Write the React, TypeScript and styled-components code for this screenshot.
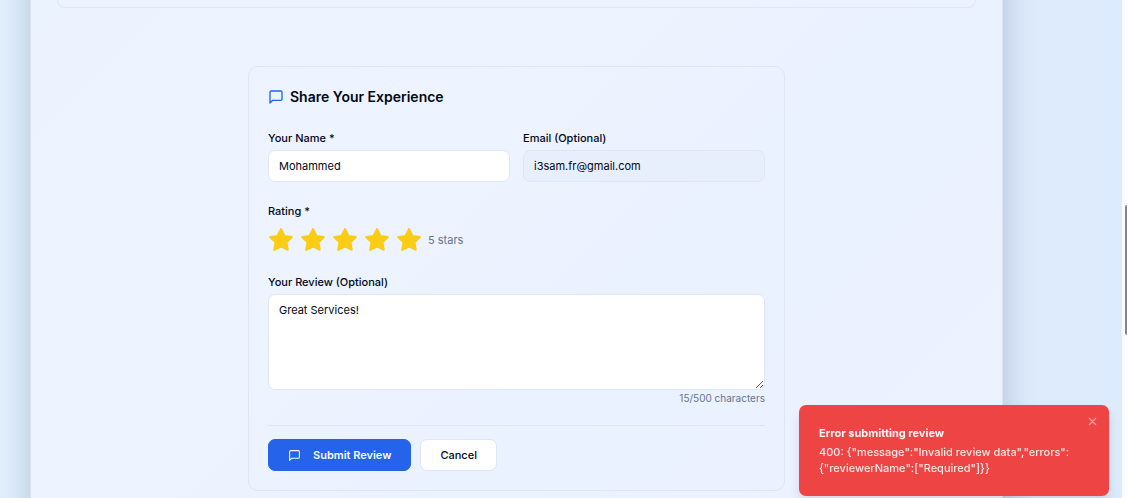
import React, { useState } from "react";
import styled, { createGlobalStyle } from "styled-components";

const ink = "#020817";
const line = "#dfe6f1";
const muted = "#64748b";
const blue = "#2563eb";

const GlobalStyle = createGlobalStyle`
  *, *::before, *::after { box-sizing: border-box; }
  body {
    margin: 0;
    color: ${ink};
    font-family: Inter, "Liberation Sans", sans-serif;
    font-size: 11px;
    line-height: 16px;
  }
  button, input, textarea { font: inherit; color: inherit; }
  h2, h3, p { margin: 0; }
`;

const Page = styled.div`
  display: flex;
  min-height: 100vh;
  overflow: hidden;
  background: linear-gradient(90deg, #e2f0fe, #deebfd 90%, #dcebfd);
`;

const Content = styled.div`
  flex: 1;
  display: flex;
  padding: 0 119px 0 30px;
`;

/* The sheet runs past the top and bottom of the page so its side shadow stays even. */
const Sheet = styled.main`
  flex: 1;
  display: flex;
  flex-direction: column;
  gap: 58px;
  margin: -40px 0;
  padding: 40px 26px 47px;
  border: solid #dbe4ee;
  border-width: 0 1px;
  background: linear-gradient(135deg, #ebf3fe 0%, #edf4ff 36%, #ebf2ff 62%, #ecf3ff 100%);
  box-shadow: 0 0 32px rgba(15, 35, 65, 0.22);
`;

const PreviousCard = styled.section`
  height: 8px;
  border: 1px solid ${line};
  border-top: 0;
  border-radius: 0 0 10px 10px;
`;

const FormCard = styled.form`
  width: 100%;
  max-width: 537px;
  margin: 0 auto;
  padding: 19px;
  display: flex;
  flex-direction: column;
  gap: 19px;
  border: 1px solid ${line};
  border-radius: 10px;
`;

const Fields = styled.div`
  display: flex;
  flex-direction: column;
  gap: 21px;
`;

const Title = styled.h2`
  display: flex;
  align-items: center;
  gap: 6px;
  padding-bottom: 3px;
  font-size: 14px;
  line-height: 22px;
  font-weight: 600;
  svg { color: ${blue}; }
`;

const Columns = styled.div`
  display: grid;
  grid-template-columns: 1fr 1fr;
  gap: 13px;
`;

const Field = styled.div<{ $gap?: number }>`
  display: flex;
  flex-direction: column;
  gap: ${(p) => p.$gap ?? 4}px;
`;

const Label = styled.label`
  font-weight: 500;
`;

const TextInput = styled.input`
  width: 100%;
  height: 32px;
  padding: 0 10px;
  border: 1px solid ${line};
  border-radius: 7px;
  background: #fff;
  &:read-only { background: #e8effc; }
`;

const TextArea = styled.textarea`
  display: block;
  width: 100%;
  height: 96px;
  padding: 7px 10px;
  border: 1px solid ${line};
  border-radius: 7px;
  background: #fff;
  resize: vertical;
`;

const Counter = styled.p`
  font-size: 10px;
  text-align: right;
  color: ${muted};
`;

const Stars = styled.div`
  display: flex;
  align-items: center;
  gap: 6px;
  color: ${muted};
`;

const StarButton = styled.button<{ $on: boolean }>`
  display: flex;
  padding: 0;
  border: 0;
  background: none;
  color: ${(p) => (p.$on ? "#facc15" : "#d1d5db")};
  cursor: pointer;
`;

const Actions = styled.div`
  display: flex;
  gap: 9px;
  padding-top: 13px;
  border-top: 1px solid ${line};
`;

const Button = styled.button<{ $primary?: boolean }>`
  display: flex;
  align-items: center;
  gap: 12px;
  height: 32px;
  padding: 0 19px;
  border: 1px solid ${(p) => (p.$primary ? blue : line)};
  border-radius: 7px;
  background: ${(p) => (p.$primary ? blue : "#fff")};
  color: ${(p) => (p.$primary ? "#f8fafc" : ink)};
  font-weight: ${(p) => (p.$primary ? 600 : 500)};
  cursor: pointer;
`;

const Track = styled.div`
  position: relative;
  width: 5px;
  background: #fcfcfc;
`;

const Thumb = styled.div`
  position: absolute;
  top: 205px;
  right: 0;
  width: 2px;
  height: 130px;
  border-radius: 2px 0 0 2px;
  background: #858585;
`;

const Toast = styled.aside`
  position: fixed;
  right: 18px;
  bottom: 2px;
  width: 310px;
  padding: 20px;
  border-radius: 7px;
  background: #ef4444;
  color: #f8fafc;
  box-shadow: 0 8px 12px rgba(0, 0, 0, 0.1);
`;

const ToastTitle = styled.h3`
  font-size: 11px;
  font-weight: 700;
  margin-bottom: 3px;
`;

const ToastText = styled.p`
  font-weight: 500;
  opacity: 0.9;
`;

const CloseButton = styled.button`
  position: absolute;
  top: 10px;
  right: 10px;
  display: flex;
  padding: 0;
  border: 0;
  background: none;
  color: #fca5a5;
  cursor: pointer;
`;

const strokeProps = {
  viewBox: "0 0 24 24",
  fill: "none",
  stroke: "currentColor",
  strokeWidth: 2,
  strokeLinecap: "round" as const,
  strokeLinejoin: "round" as const,
  "aria-hidden": true,
};

const MessageIcon = ({ size }: { size: number }) => (
  <svg width={size} height={size} {...strokeProps}>
    <path d="M21 15a2 2 0 0 1-2 2H7l-4 4V5a2 2 0 0 1 2-2h14a2 2 0 0 1 2 2z" />
  </svg>
);

const StarIcon = () => (
  <svg width={26} height={26} {...strokeProps} fill="currentColor">
    <polygon points="12 2 15.09 8.26 22 9.27 17 14.14 18.18 21.02 12 17.77 5.82 21.02 7 14.14 2 9.27 8.91 8.26 12 2" />
  </svg>
);

const CloseIcon = () => (
  <svg width={13} height={13} {...strokeProps}>
    <path d="M18 6 6 18M6 6l12 12" />
  </svg>
);

export default function App() {
  const [rating, setRating] = useState(5);
  const [review, setReview] = useState("Great Services!");
  const [toastOpen, setToastOpen] = useState(true);

  return (
    <>
      <GlobalStyle />
      <Page>
        <Content>
          <Sheet>
            <PreviousCard />
            <FormCard onSubmit={(e) => e.preventDefault()}>
              <Title>
                <MessageIcon size={16} />
                Share Your Experience
              </Title>
              <Fields>
                <Columns>
                  <Field>
                    <Label htmlFor="name">Your Name *</Label>
                    <TextInput id="name" defaultValue="Mohammed" />
                  </Field>
                  <Field>
                    <Label htmlFor="email">Email (Optional)</Label>
                    <TextInput id="email" type="email" value="i3sam.fr@gmail.com" readOnly />
                  </Field>
                </Columns>
                <Field $gap={8}>
                  <Label as="span" id="rating">Rating *</Label>
                  <Stars role="group" aria-labelledby="rating">
                    {[1, 2, 3, 4, 5].map((n) => (
                      <StarButton
                        key={n}
                        type="button"
                        $on={n <= rating}
                        aria-label={`${n} stars`}
                        aria-pressed={n === rating}
                        onClick={() => setRating(n)}
                      >
                        <StarIcon />
                      </StarButton>
                    ))}
                    <span>{rating} stars</span>
                  </Stars>
                </Field>
                <Field>
                  <Label htmlFor="review">Your Review (Optional)</Label>
                  <div>
                    <TextArea
                      id="review"
                      maxLength={500}
                      value={review}
                      onChange={(e) => setReview(e.target.value)}
                    />
                    <Counter>{review.length}/500 characters</Counter>
                  </div>
                </Field>
              </Fields>
              <Actions>
                <Button type="submit" $primary>
                  <MessageIcon size={13} />
                  Submit Review
                </Button>
                <Button type="button">Cancel</Button>
              </Actions>
            </FormCard>
          </Sheet>
        </Content>
        <Track>
          <Thumb />
        </Track>
      </Page>
      {toastOpen && (
        <Toast role="alert">
          <ToastTitle>Error submitting review</ToastTitle>
          <ToastText>
            {'400: {"message":"Invalid review data","errors":{"reviewerName":["Required"]}}'}
          </ToastText>
          <CloseButton type="button" aria-label="Close" onClick={() => setToastOpen(false)}>
            <CloseIcon />
          </CloseButton>
        </Toast>
      )}
    </>
  );
}
